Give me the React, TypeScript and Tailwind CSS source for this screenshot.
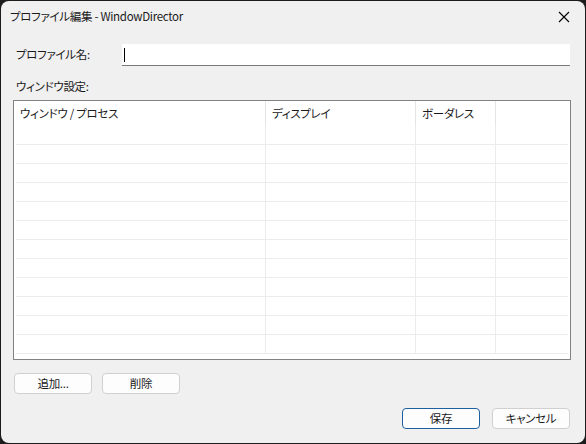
import React from 'react';

const font = { fontFamily: '"Noto Sans CJK JP", "Noto Sans", sans-serif' };

const columns = [
    { label: 'ウィンドウ / プロセス', width: 'w-[251px]' },
    { label: 'ディスプレイ', width: 'w-[150px]' },
    { label: 'ボーダレス', width: 'w-[80px]' },
    { label: '', width: 'flex-1' },
];

const rows = Array.from({ length: 12 }, (_, i) => i);

const CloseIcon = () => (
    <svg width="12" height="12" viewBox="0 0 12 12" className="text-black">
        <path d="M1 1 L11 11 M11 1 L1 11" stroke="currentColor" strokeWidth="1.1" fill="none" />
    </svg>
);

interface ButtonProps {
    children: React.ReactNode;
    primary?: boolean;
}

const WinButton = ({ children, primary }: ButtonProps) => (
    <button
        className={
            primary
                ? 'w-[78px] h-[21px] rounded-[4px] border border-[#1d5f9f] bg-[#fdfdfd] text-[11.5px] leading-none flex items-center justify-center'
                : 'w-[78px] h-[21px] rounded-[4px] border border-[#d0d0d0] bg-[#fdfdfd] text-[11.5px] leading-none flex items-center justify-center'
        }
    >
        {children}
    </button>
);

export default function App() {
    return (
        <div
            className="w-[586px] h-[444px] bg-[#1c1c1c] p-[1px] overflow-hidden [font-feature-settings:'palt'] tracking-[-0.3px] text-[#1a1a1a]"
            style={font}
        >
            <div className="h-full w-full rounded-[8px] bg-[#f0f0f0] flex flex-col">
                {/* title bar */}
                <div className="h-[31px] flex items-center justify-between pl-[9px] pr-[9px]">
                    <span className="text-[11.5px]">プロファイル編集 - WindowDirector</span>
                    <div className="w-[24px] flex justify-center">
                        <CloseIcon />
                    </div>
                </div>

                {/* profile name */}
                <div className="mt-[12px] h-[22px] flex items-center pl-[15px]">
                    <span className="w-[106px] text-[11.5px]">プロファイル名:</span>
                    <div className="w-[448px] h-[22px] bg-white border-b border-[#7a7a7a] flex items-center pl-[2px]">
                        <div className="w-[1px] h-[14px] bg-black" />
                    </div>
                </div>

                {/* window settings */}
                <div className="mt-[13px] h-[16px] flex items-center pl-[15px] text-[11.5px]">ウィンドウ設定:</div>

                <div className="mt-[5px] ml-[12px] w-[558px] h-[260px] border border-[#828282] bg-white overflow-hidden flex flex-col">
                    <div className="h-[25px] flex shrink-0">
                        {columns.map((c, i) => (
                            <div
                                key={i}
                                className={`${c.width} h-full flex items-center text-[11.5px] ${i === 0 ? 'pl-[6px]' : 'pl-[6px] border-l border-[#e5e5e5]'}`}
                            >
                                {c.label}
                            </div>
                        ))}
                    </div>
                    <div className="px-[2px]">
                        {rows.map((r) => (
                            <div key={r} className="h-[19px] flex border-b border-[#ececec]">
                                <div className="w-[249px] h-full" />
                                <div className="w-[150px] h-full border-l border-[#ececec]" />
                                <div className="w-[80px] h-full border-l border-[#ececec]" />
                                <div className="flex-1 h-full border-l border-[#ececec]" />
                            </div>
                        ))}
                    </div>
                </div>

                {/* add / delete */}
                <div className="mt-[13px] ml-[13px] flex gap-[10px]">
                    <WinButton>追加...</WinButton>
                    <WinButton>削除</WinButton>
                </div>

                {/* save / cancel */}
                <div className="mt-[14px] pr-[15px] flex justify-end gap-[12px]">
                    <WinButton primary>保存</WinButton>
                    <WinButton>キャンセル</WinButton>
                </div>
            </div>
        </div>
    );
}
